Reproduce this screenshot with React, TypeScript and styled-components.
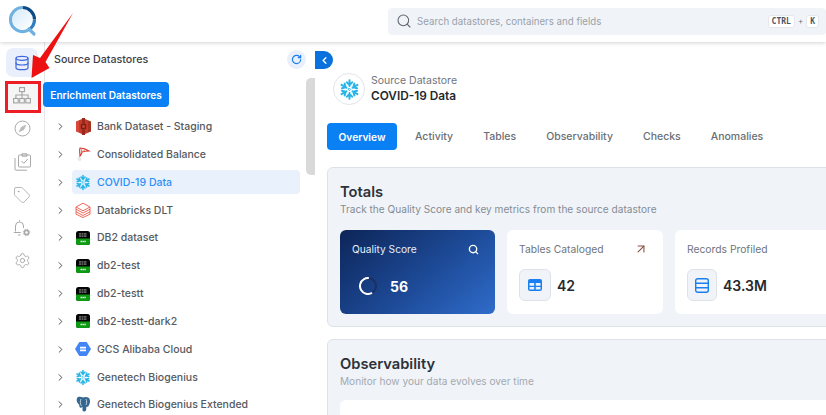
import React from "react";
import styled, { createGlobalStyle } from "styled-components";
import { ArrowUpRight, ChevronLeft, ChevronRight, Database, RotateCw, Search, Settings, Tag } from "lucide-react";

const GlobalStyle = createGlobalStyle`
  html, body {
    margin: 0;
    padding: 0;
    background: #ffffff;
    overflow: hidden;
  }
  * {
    box-sizing: border-box;
  }
`;

function Snowflake({ size = 18 }: { size?: number }) {
  return (
    <svg width={size} height={size} viewBox="0 0 24 24" fill="none" stroke="#29b5e8" strokeWidth="2.300" strokeLinecap="round" strokeLinejoin="round">
      {[0, 60, 120, 180, 240, 300].map((angle) => (
        <g key={angle} transform={`rotate(${angle} 12 12)`}>
          <path d="M12 1.500v6.500M9 3.800 12 7l3-3.200" />
        </g>
      ))}
      <path d="M12 10.600 13.400 12 12 13.400 10.600 12Z" strokeWidth="1.100" />
    </svg>
  );
}

function AwsIcon() {
  return (
    <svg width="15" height="17" viewBox="0 0 15 17">
      <path d="M0 3.500 3 2.200v12.600L0 13.500Z" fill="#d9473a" />
      <path d="M15 3.500 12 2.200v12.600l3-1.300Z" fill="#a8301f" />
      <path d="M3 2.200 6 1v15l-3-1.200Z" fill="#c23a2c" />
      <path d="M12 2.200 9 1v15l3-1.200Z" fill="#c23a2c" />
      <path d="M6 0h3v17H6Z" fill="#9c2a1c" />
      <path d="M4.800 6h5.400v5H4.800Z" fill="#7d2013" />
      <path d="M6.300 7.300h2.400v2.400H6.300Z" fill="#d9473a" />
    </svg>
  );
}

function SqlIcon() {
  return (
    <svg width="16" height="18" viewBox="0 0 16 18" fill="none">
      <path d="M4 16c-2-1-2-3 0-5l2 2c1 1 1 3-2 3Z" fill="#e9e9e9" />
      <path d="M5 3c3 0 6 1 9 3-3 0-5 0-7 1 0 2-1 3-2 4 0-3-1-5 0-8Z" stroke="#d8352a" strokeWidth="1.100" />
      <path d="M7 3 6 9M10 4 8 7" stroke="#e8675c" strokeWidth="0.900" />
    </svg>
  );
}

function DatabricksIcon() {
  return (
    <svg width="16" height="16" viewBox="0 0 16 16" fill="none" stroke="#ee5a4a" strokeWidth="0.900">
      <path d="M1 5 8 1.200 15 5 8 8.800ZM1 5v2.300L8 11l7-3.700V5M1 7.300v2.500L8 13.500l7-3.700V7.300M1 9.800v2.400L8 15.500l7-3.300V9.800" />
    </svg>
  );
}

function Db2Icon() {
  return (
    <svg width="14" height="14" viewBox="0 0 14 14">
      <rect width="14" height="14" rx="2.500" fill="#050505" />
      <path d="M0 7.500h14v4A2.500 2.500 0 0 1 11.500 14h-9A2.500 2.500 0 0 1 0 11.500Z" fill="#0c9a12" />
      <path d="M3 2.700h8M3 4h8M3 5.300h8" stroke="#a8a8a8" strokeWidth="0.700" strokeDasharray="2 0.500" />
      <path d="M4.500 10.500h5.500" stroke="#d5f2d5" strokeWidth="1.300" strokeDasharray="1.500 0.400" />
    </svg>
  );
}

function GcsIcon() {
  return (
    <svg width="16" height="16" viewBox="0 0 16 16">
      <path d="M4.300 1h7.400L16 8l-4.300 7H4.300L0 8Z" fill="#4285f4" />
      <path d="M5 5.800h6v1.700H5ZM5 8.500h6v1.700H5Z" fill="#ffffff" />
    </svg>
  );
}

function PostgresIcon() {
  return (
    <svg width="16" height="17" viewBox="0 0 16 17">
      <path d="M3 1c2-.8 3.500 0 5 .5 2-.8 4-.8 6 .4 1.500 2 1.500 5-.5 8-.5 1-1.500 1-2 .5l-.5 4c-1 1.500-3 1.500-3.500 0V11c-1 .3-1.500 1-2.500.5-1-1-.5-2-1-3C2 7 .5 3 3 1Z" fill="#336791" />
      <path d="M6 3c-1 2-1 5 .5 7M11 3c1 2 .8 4 0 6" stroke="#dfe8ef" strokeWidth="0.800" fill="none" />
    </svg>
  );
}

function LogoMark() {
  return (
    <svg width="28" height="36" viewBox="0 0 28 36" fill="none">
      <defs>
        <linearGradient id="logoFill" x1="0" y1="0" x2="1" y2="1">
          <stop offset="0" stopColor="#d5ebfa" />
          <stop offset="1" stopColor="#ffffff" />
        </linearGradient>
      </defs>
      <circle cx="13.500" cy="14.500" r="10" fill="url(#logoFill)" />
      <path d="M13.500 2.500a12 12 0 0 1 12 12" stroke="#0c4a86" strokeWidth="3.200" />
      <path d="M25.500 14.500a12 12 0 0 1-6 10.400" stroke="#2d7cc0" strokeWidth="3.200" />
      <path d="M19.500 24.900a12 12 0 0 1-18-10.400 12 12 0 0 1 12-12" stroke="#6fb2e2" strokeWidth="3.200" />
      <path d="m20 24 5 5" stroke="#6fb2e2" strokeWidth="3.200" strokeLinecap="round" />
    </svg>
  );
}

function OrgChartIcon() {
  return (
    <svg width="18" height="17" viewBox="0 0 18 17" fill="none" stroke="#a3a3a3" strokeWidth="1.100">
      <rect x="6.500" y="0.600" width="5" height="4" />
      <rect x="0.600" y="11.500" width="4.600" height="4.400" />
      <rect x="6.700" y="11.500" width="4.600" height="4.400" />
      <rect x="12.800" y="11.500" width="4.600" height="4.400" />
      <path d="M9 4.600v6.900M2.900 11.500V8h12.200v3.500" />
    </svg>
  );
}

function CompassIcon() {
  return (
    <svg width="17" height="17" viewBox="0 0 17 17" fill="none" stroke="#a8a8a8" strokeWidth="1">
      <circle cx="8.500" cy="8.500" r="7.500" />
      <path d="M12 5 9.800 9.800 5 12l2.200-4.800Z" fill="#bcbcbc" strokeWidth="0.400" />
    </svg>
  );
}

function ClipboardStackIcon() {
  return (
    <svg width="17" height="18" viewBox="0 0 17 18" fill="none" stroke="#a8a8a8" strokeWidth="1">
      <rect x="4.500" y="2" width="12" height="12" rx="0.800" />
      <path d="M8 3.200V.8h5v2.400Z" />
      <path d="M1 5v11.200a1 1 0 0 0 1 1h11" />
      <path d="m7.500 8 2.200 2.300L13.800 6" />
    </svg>
  );
}

function BellGearIcon() {
  return (
    <svg width="18" height="18" viewBox="0 0 18 18" fill="none" stroke="#a8a8a8" strokeWidth="1">
      <path d="M6.500 1.200v1.300M2.500 12.500V7a4 4 0 0 1 8 0v2" />
      <path d="M.8 13.500h7" />
      <path d="M5 16h2.500" />
      <circle cx="13.500" cy="13.500" r="2.100" strokeWidth="1.600" />
      <circle cx="13.500" cy="13.500" r="3.300" strokeWidth="0.900" strokeDasharray="1.200 1.400" />
    </svg>
  );
}

function TableGlyph() {
  return (
    <svg width="14" height="12" viewBox="0 0 14 12">
      <rect x="0" y="0" width="14" height="12" rx="2" fill="#1a7ff0" />
      <path d="M1.500 4h4.700v2.700H1.500ZM7.800 4h4.700v2.700H7.800ZM1.500 8h4.700v2.500H1.500ZM7.800 8h4.700v2.500H7.800Z" fill="#e9f2fc" />
    </svg>
  );
}

function RowsGlyph() {
  return (
    <svg width="14" height="15" viewBox="0 0 14 15" fill="none" stroke="#1a7ff0" strokeWidth="1.400">
      <rect x="0.700" y="0.700" width="12.600" height="13.600" rx="2" />
      <path d="M0.700 5.200h12.600M0.700 9.800h12.600" />
    </svg>
  );
}

const datastores = [
  { name: "Bank Dataset - Staging", icon: <AwsIcon /> },
  { name: "Consolidated Balance", icon: <SqlIcon /> },
  { name: "COVID-19 Data", icon: <Snowflake size={17} />, active: true },
  { name: "Databricks DLT", icon: <DatabricksIcon /> },
  { name: "DB2 dataset", icon: <Db2Icon /> },
  { name: "db2-test", icon: <Db2Icon /> },
  { name: "db2-testt", icon: <Db2Icon /> },
  { name: "db2-testt-dark2", icon: <Db2Icon /> },
  { name: "GCS Alibaba Cloud", icon: <GcsIcon /> },
  { name: "Genetech Biogenius", icon: <Snowflake size={17} /> },
  { name: "Genetech Biogenius Extended", icon: <PostgresIcon /> },
];

const tabs = ["Overview", "Activity", "Tables", "Observability", "Checks", "Anomalies"];

export default function App() {
  return (
    <Page>
      <GlobalStyle />
      <TopBar>
        <LogoMark />
        <SearchBox>
          <Search size={16} color="#5f6670" strokeWidth={1.6} />
          <SearchHint>Search datastores, containers and fields</SearchHint>
          <Keys>
            <Key>CTRL</Key>
            <Plus>+</Plus>
            <Key>K</Key>
          </Keys>
        </SearchBox>
      </TopBar>
      <Body>
        <Rail>
          <RailButton $active>
            <Database size={16} color="#3f66dd" strokeWidth={1.8} />
          </RailButton>
          <RailButton $marked>
            <OrgChartIcon />
          </RailButton>
          <RailButton>
            <CompassIcon />
          </RailButton>
          <RailButton>
            <ClipboardStackIcon />
          </RailButton>
          <RailButton>
            <Tag size={18} color="#a8a8a8" strokeWidth={1.100} />
          </RailButton>
          <RailButton>
            <BellGearIcon />
          </RailButton>
          <RailButton>
            <Settings size={17} color="#9f9f9f" strokeWidth={1.200} />
          </RailButton>
        </Rail>
        <TreePanel>
          <TreeHead>
            <TreeTitle>Source Datastores</TreeTitle>
            <RefreshButton>
              <RotateCw size={11} color="#1a7ff0" strokeWidth={2.600} />
            </RefreshButton>
          </TreeHead>
          <EnrichButton>Enrichment Datastores</EnrichButton>
          <TreeList>
            {datastores.map((store) => (
              <TreeRow key={store.name}>
                <ChevronRight size={11} color="#444444" strokeWidth={2} />
                <TreeItem $active={store.active}>
                  <ItemIcon>{store.icon}</ItemIcon>
                  {store.name}
                </TreeItem>
              </TreeRow>
            ))}
          </TreeList>
          <ScrollThumb />
        </TreePanel>
        <Main>
          <CollapseButton>
            <ChevronLeft size={11} color="#ffffff" strokeWidth={3} />
          </CollapseButton>
          <Heading>
            <HeadingBadge>
              <Snowflake size={21} />
            </HeadingBadge>
            <div>
              <HeadingKind>Source Datastore</HeadingKind>
              <HeadingName>COVID-19 Data</HeadingName>
            </div>
          </Heading>
          <Tabs>
            {tabs.map((tab, index) => (
              <Tab key={tab} $active={index === 0}>
                {tab}
              </Tab>
            ))}
          </Tabs>
          <Section>
            <SectionTitle>Totals</SectionTitle>
            <SectionNote>Track the Quality Score and key metrics from the source datastore</SectionNote>
            <Cards>
              <ScoreCard>
                <CardTop>
                  <ScoreLabel>Quality Score</ScoreLabel>
                  <Search size={11} color="#ffffff" strokeWidth={3} />
                </CardTop>
                <ScoreRow>
                  <svg width="18" height="18" viewBox="0 0 18 18" fill="none" strokeWidth="2">
                    <circle cx="9" cy="9" r="8" stroke="#1c2f63" />
                    <circle cx="9" cy="9" r="8" stroke="#ffffff" strokeDasharray="30 50.300" transform="rotate(60 9 9)" />
                  </svg>
                  <ScoreValue>56</ScoreValue>
                </ScoreRow>
              </ScoreCard>
              <StatCard>
                <CardTop>
                  <StatLabel>Tables Cataloged</StatLabel>
                  <ArrowUpRight size={14} color="#8a4b3e" strokeWidth={1.800} />
                </CardTop>
                <StatRow>
                  <StatIcon>
                    <TableGlyph />
                  </StatIcon>
                  <StatValue>42</StatValue>
                </StatRow>
              </StatCard>
              <StatCard $wide>
                <CardTop>
                  <StatLabel>Records Profiled</StatLabel>
                </CardTop>
                <StatRow>
                  <StatIcon $narrow>
                    <RowsGlyph />
                  </StatIcon>
                  <StatValue>43.3M</StatValue>
                </StatRow>
              </StatCard>
            </Cards>
          </Section>
          <Section>
            <SectionTitle>Observability</SectionTitle>
            <SectionNote $light>Monitor how your data evolves over time</SectionNote>
            <BlankCard />
          </Section>
        </Main>
      </Body>
      <MarkerBox />
      <MarkerArrow width="80" height="80" viewBox="0 0 80 80">
        <path d="M73 13 45.500 62 49.500 68 31.500 78 33 55 40 58Z" fill="#ee1111" />
      </MarkerArrow>
    </Page>
  );
}

const Page = styled.div`
  position: relative;
  width: 826px;
  height: 415px;
  overflow: hidden;
  font-family: Inter, "Noto Sans", sans-serif;
  background: #ffffff;
`;

const TopBar = styled.header`
  position: relative;
  z-index: 2;
  display: flex;
  align-items: center;
  justify-content: space-between;
  height: 42px;
  padding: 4px 0 0 9px;
  background: #ffffff;
  box-shadow: 0 1px 4px rgba(0, 0, 0, 0.18);
`;

const SearchBox = styled.div`
  display: flex;
  align-items: center;
  width: 438px;
  height: 27px;
  margin-top: -4px;
  padding: 0 7px 0 8px;
  background: #f0f4f9;
  border-radius: 4px;
`;

const SearchHint = styled.span`
  flex: 1;
  margin-left: 5px;
  font-size: 9.700px;
  color: #9aa1a9;
`;

const Keys = styled.div`
  display: flex;
  align-items: center;
  gap: 3px;
`;

const Key = styled.span`
  padding: 1px 3px;
  font-family: "DejaVu Sans Mono", monospace;
  font-size: 8px;
  font-weight: 700;
  color: #4b5563;
  background: #ffffff;
  border: 1px solid #e4e8ee;
  border-radius: 3px;
`;

const Plus = styled.span`
  font-size: 8px;
  color: #6b7280;
`;

const Body = styled.div`
  display: flex;
  height: 373px;
`;

const Rail = styled.nav`
  display: flex;
  flex-direction: column;
  align-items: center;
  flex: none;
  gap: 4px;
  width: 45px;
  padding-top: 6px;
  border-right: 1px solid #e3e5e8;
`;

const RailButton = styled.div<{ $active?: boolean; $marked?: boolean }>`
  display: flex;
  align-items: center;
  justify-content: center;
  width: 32px;
  height: 29px;
  border-radius: 7px;
  background: ${(p) => (p.$active ? "#e9f0fb" : p.$marked ? "#f5f5f5" : "transparent")};
`;

const TreePanel = styled.aside`
  position: relative;
  flex: none;
  width: 270px;
  padding-top: 7px;
`;

const TreeHead = styled.div`
  display: flex;
  align-items: center;
  justify-content: space-between;
  height: 20px;
  padding: 0 9px 0 9px;
`;

const TreeTitle = styled.span`
  font-size: 10.700px;
  font-weight: 500;
  color: #3c4148;
`;

const RefreshButton = styled.div`
  display: flex;
  align-items: center;
  justify-content: center;
  width: 19px;
  height: 19px;
  border-radius: 50%;
  background: #e9f0fb;
`;

const EnrichButton = styled.div`
  display: flex;
  align-items: center;
  justify-content: center;
  width: 126px;
  height: 25px;
  margin: 13px 0 0 -2px;
  font-size: 10.100px;
  font-weight: 600;
  color: #ffffff;
  background: #0a80f5;
  border-radius: 4px;
`;

const TreeList = styled.ul`
  display: flex;
  flex-direction: column;
  gap: 3.850px;
  margin: 7.500px 0 0;
  padding: 0 0 0 10px;
  list-style: none;
`;

const TreeRow = styled.li`
  display: flex;
  align-items: center;
  gap: 12px;
  height: 24px;
`;

const TreeItem = styled.div<{ $active?: boolean }>`
  display: flex;
  align-items: center;
  width: 228px;
  height: 24px;
  flex: none;
  margin-left: -6px;
  padding-left: 3px;
  font-size: 10.500px;
  font-weight: 500;
  white-space: nowrap;
  color: ${(p) => (p.$active ? "#2b8ff7" : "#555a60")};
  background: ${(p) => (p.$active ? "#e9f1fc" : "transparent")};
  border-radius: 4px;
`;

const ItemIcon = styled.span`
  display: flex;
  align-items: center;
  justify-content: center;
  width: 16px;
  margin-right: 6px;
`;

const ScrollThumb = styled.div`
  position: absolute;
  top: 36px;
  right: 0;
  width: 9px;
  height: 97px;
  background: #d9d9d9;
  border-radius: 5px 0 0 5px;
`;

const Main = styled.main`
  position: relative;
  flex: 1;
  min-width: 0;
  padding: 31px 0 0 12px;
`;

const CollapseButton = styled.div`
  position: absolute;
  top: 9px;
  left: 0;
  display: flex;
  align-items: center;
  justify-content: center;
  width: 18px;
  height: 18px;
  background: #0a72dc;
  border-radius: 0 9px 9px 0;
`;

const Heading = styled.div`
  display: flex;
  align-items: center;
  gap: 6px;
  height: 32px;
  margin-left: 6px;
`;

const HeadingBadge = styled.div`
  display: flex;
  align-items: center;
  justify-content: center;
  width: 32px;
  height: 32px;
  border: 1px solid #e3e5e8;
  border-radius: 50%;
`;

const HeadingKind = styled.div`
  font-size: 10.500px;
  line-height: 14px;
  color: #70757c;
`;

const HeadingName = styled.div`
  margin-top: 1px;
  font-size: 11.800px;
  line-height: 15px;
  font-weight: 600;
  color: #24282d;
`;

const Tabs = styled.div`
  display: flex;
  align-items: center;
  gap: 6px;
  height: 27px;
  margin-top: 18px;
`;

const Tab = styled.div<{ $active?: boolean }>`
  display: flex;
  align-items: center;
  justify-content: center;
  height: 27px;
  padding: 0 12px;
  ${(p) => (p.$active ? "width: 70px; padding: 0;" : "")}
  font-size: ${(p) => (p.$active ? "10.200px" : "10.500px")};
  font-weight: ${(p) => (p.$active ? 600 : 500)};
  color: ${(p) => (p.$active ? "#ffffff" : "#6a6f76")};
  background: ${(p) => (p.$active ? "#0a80f5" : "transparent")};
  border-radius: 4px;
`;

const Section = styled.section`
  width: 520px;
  margin-top: 12px;
  padding: 14px 0 12px 12px;
  background: #f0f4f9;
  border: 1px solid #dde2e8;
  border-radius: 6px;
  &:first-of-type {
    margin-top: 17px;
  }
`;

const SectionTitle = styled.h2`
  margin: 0;
  font-size: 14.700px;
  line-height: 20px;
  font-weight: 600;
  color: #2d3238;
`;

const SectionNote = styled.p<{ $light?: boolean }>`
  margin: 0;
  font-size: 10.100px;
  line-height: 15px;
  color: ${(p) => (p.$light ? "#a4a9b0" : "#868c93")};
`;

const Cards = styled.div`
  display: flex;
  gap: 12px;
  margin-top: 13px;
`;

const ScoreCard = styled.div`
  flex: none;
  width: 155px;
  height: 84px;
  padding: 12px 16px 0 12px;
  background: linear-gradient(140deg, #0d2558 0%, #1d4a97 55%, #2f6ccb 100%);
  border-radius: 6px;
`;

const CardTop = styled.div`
  display: flex;
  align-items: center;
  justify-content: space-between;
  height: 14px;
`;

const ScoreLabel = styled.span`
  font-size: 10.200px;
  color: #e6eefb;
`;

const ScoreRow = styled.div`
  display: flex;
  align-items: center;
  gap: 13px;
  margin-top: 21px;
  padding-left: 7px;
`;

const ScoreValue = styled.span`
  font-size: 14px;
  font-weight: 700;
  color: #ffffff;
`;

const StatCard = styled.div<{ $wide?: boolean }>`
  flex: none;
  width: ${(p) => (p.$wide ? "170px" : "156px")};
  height: 84px;
  padding: 12px 15px 0 12px;
  background: #ffffff;
  border-radius: 6px;
`;

const StatLabel = styled.span`
  font-size: 10.300px;
  color: #70757c;
`;

const StatRow = styled.div`
  display: flex;
  align-items: center;
  gap: 6px;
  margin-top: 13px;
`;

const StatIcon = styled.div<{ $narrow?: boolean }>`
  display: flex;
  align-items: center;
  justify-content: center;
  width: ${(p) => (p.$narrow ? "30px" : "32px")};
  height: 32px;
  background: #f0f4f9;
  border: 1px solid #dde2e8;
  border-radius: 6px;
`;

const StatValue = styled.span`
  font-size: 14px;
  font-weight: 600;
  color: #26292e;
`;

const BlankCard = styled.div`
  height: 40px;
  margin-top: 11px;
  background: #ffffff;
  border-radius: 6px;
`;

const MarkerBox = styled.div`
  position: absolute;
  top: 81px;
  left: 5px;
  width: 36px;
  height: 32px;
  border: 3px solid #ee1c25;
  z-index: 3;
`;

const MarkerArrow = styled.svg`
  position: absolute;
  top: 0;
  left: 0;
  z-index: 3;
`;
